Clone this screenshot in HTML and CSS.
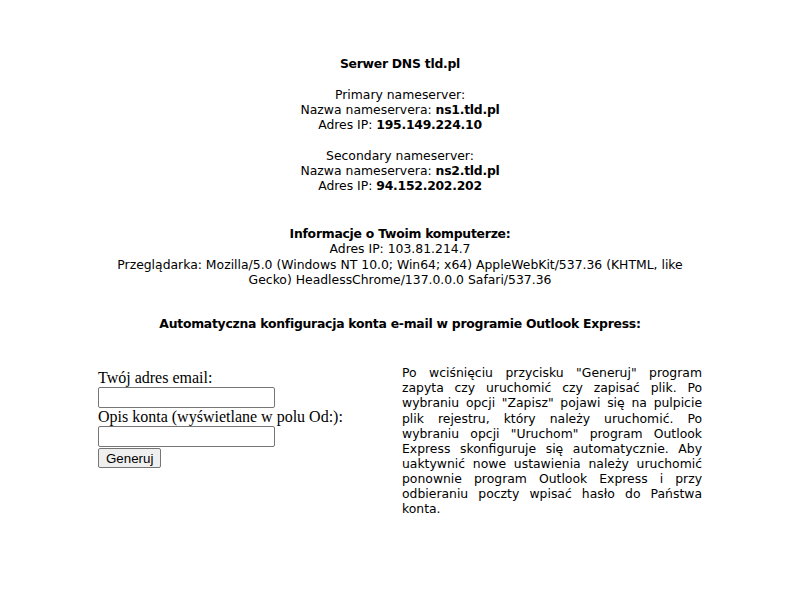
FILE: index.html
```html
<!DOCTYPE html>
<html lang="pl">
<head>
<meta charset="utf-8">
<title>Serwer DNS tld.pl</title>
<link rel="stylesheet" href="styles.css">
</head>
<body>
<div class="page">
  <div class="title">Serwer DNS tld.pl</div>
  <div class="block">
    Primary nameserver:<br>
    Nazwa nameservera: <b>ns1.tld.pl</b><br>
    Adres IP: <b>195.149.224.10</b>
  </div>
  <div class="block">
    Secondary nameserver:<br>
    Nazwa nameservera: <b>ns2.tld.pl</b><br>
    Adres IP: <b>94.152.202.202</b>
  </div>
  <div class="info">
    <b>Informacje o Twoim komputerze:</b><br>
    Adres IP: 103.81.214.7<br>
    Przeglądarka: Mozilla/5.0 (Windows NT 10.0; Win64; x64) AppleWebKit/537.36 (KHTML, like Gecko) HeadlessChrome/137.0.0.0 Safari/537.36
  </div>
  <div class="auto"><b>Automatyczna konfiguracja konta e-mail w programie Outlook Express:</b></div>
</div>
<div class="config">
  <form class="form">
    <label class="lbl" for="email">Twój adres email:</label>
    <input class="field" id="email" type="text">
    <label class="lbl" for="opis">Opis konta (wyświetlane w polu Od:):</label>
    <input class="field" id="opis" type="text">
    <button class="btn" type="button">Generuj</button>
  </form>
  <div class="desc">Po wciśnięciu przycisku "Generuj" program zapyta czy uruchomić czy zapisać plik. Po wybraniu opcji "Zapisz" pojawi się na pulpicie plik rejestru, który należy uruchomić. Po wybraniu opcji "Uruchom" program Outlook Express skonfiguruje się automatycznie. Aby uaktywnić nowe ustawienia należy uruchomić ponownie program Outlook Express i przy odbieraniu poczty wpisać hasło do Państwa konta.</div>
</div>
</body>
</html>
```
FILE: styles.css
```css
html, body {
  margin: 0;
  padding: 0;
  background: #fff;
  color: #000;
}
body {
  padding: 8px;
}
.page {
  width: 600px;
  margin: 0 auto;
  padding-top: 48px;
  font-family: "DejaVu Sans", Verdana, sans-serif;
  font-size: 12.4px;
  line-height: 15.3px;
  text-align: center;
}
.page b,
.title {
  font-weight: bold;
  letter-spacing: -0.25px;
}
.block {
  margin-top: 15.3px;
}
.info {
  margin-top: 32.3px;
}
.auto {
  margin-top: 28.8px;
}
.config {
  width: 604px;
  margin: 34px auto 0;
  display: grid;
  grid-template-columns: 1fr 300px;
}
.form {
  margin: 4px 0 0;
  display: flex;
  flex-direction: column;
  align-items: flex-start;
  font-family: "Liberation Serif", "Times New Roman", serif;
  font-size: 16px;
  line-height: 18px;
}
.field {
  width: 177px;
  height: 21px;
  box-sizing: border-box;
  border: 1px solid #767676;
  border-radius: 2px;
  padding: 1px 2px;
  margin: 0;
  font-family: "Liberation Sans", Arial, sans-serif;
  font-size: 13px;
}
.btn {
  margin: 1px 0 0;
  height: 20px;
  box-sizing: border-box;
  padding: 1px 7px;
  border: 1px solid #767676;
  border-radius: 2px;
  background: #efefef;
  font-family: "Liberation Sans", Arial, sans-serif;
  font-size: 13.33px;
  line-height: 15px;
  color: #000;
}
.desc {
  font-family: "DejaVu Sans", Verdana, sans-serif;
  font-size: 12.4px;
  line-height: 15.1px;
  text-align: justify;
}
```
